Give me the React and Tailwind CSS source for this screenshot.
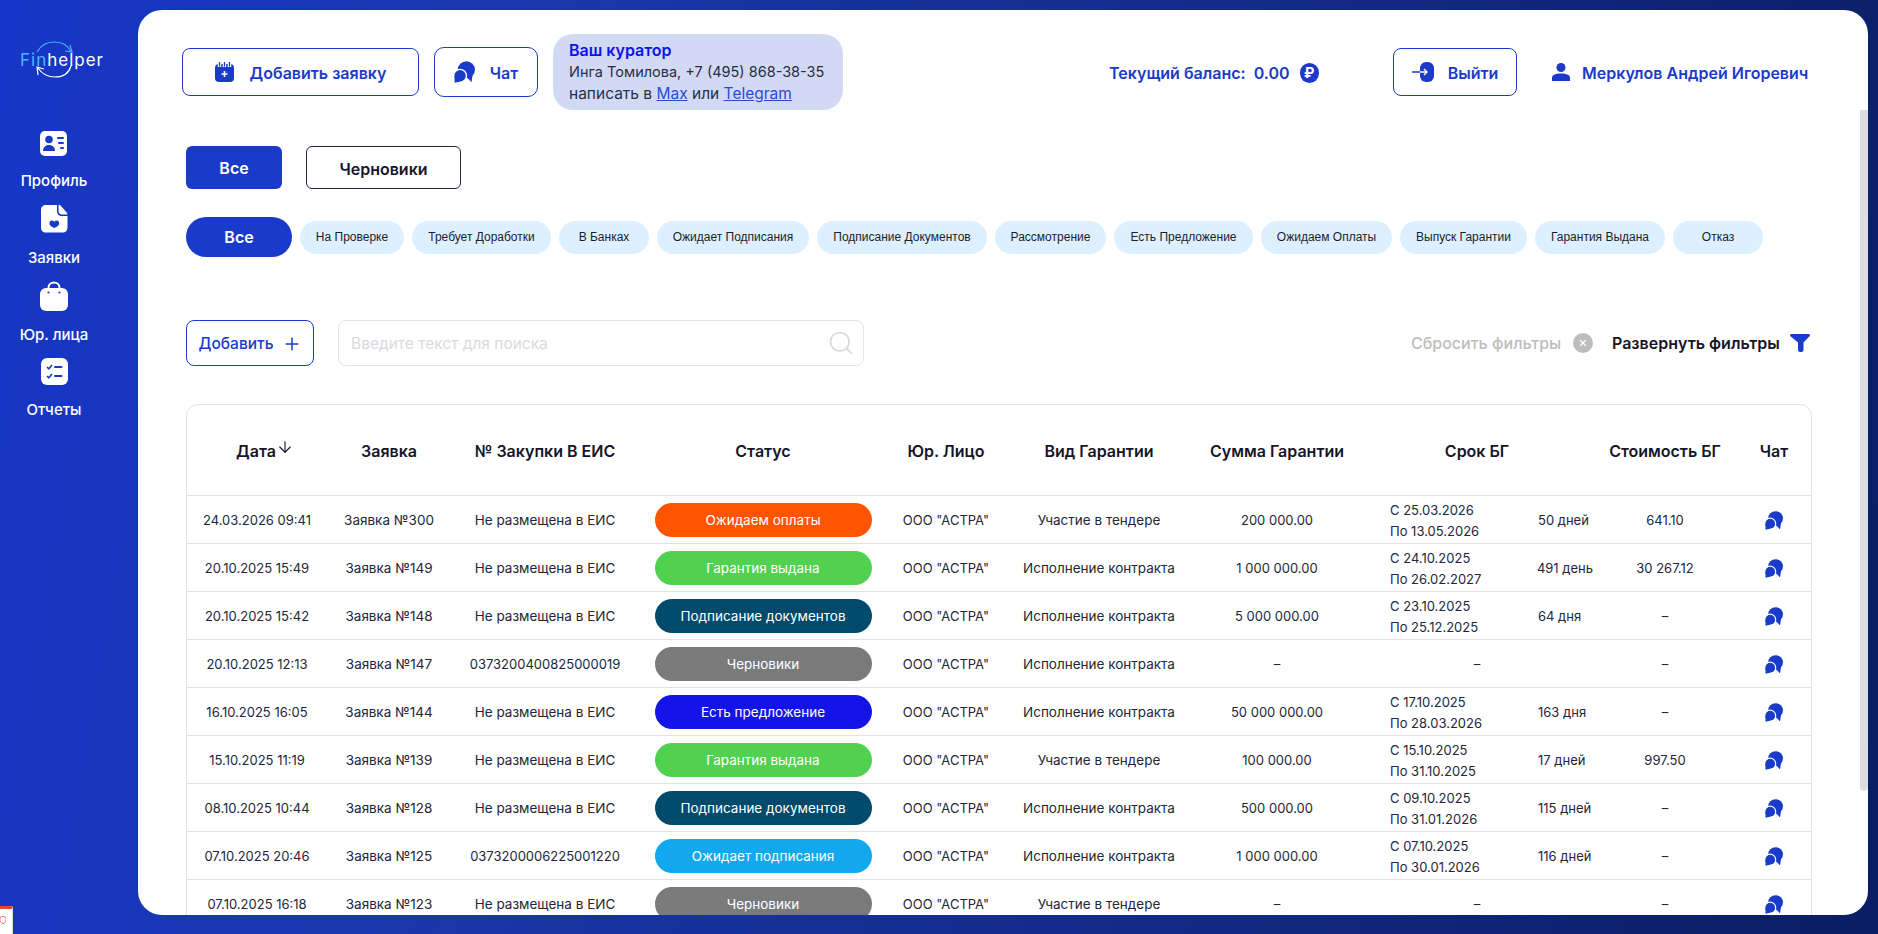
import React from "react";
import { Plus, Search, ArrowDown, X } from "lucide-react";

const rows = [
  { date: "24.03.2026 09:41", num: "Заявка №300", eis: "Не размещена в ЕИС", status: "Ожидаем оплаты", color: "bg-[#ff5500]", kind: "Участие в тендере", sum: "200 000.00", from: "С 25.03.2026", to: "По 13.05.2026", days: "50 дней", cost: "641.10" },
  { date: "20.10.2025 15:49", num: "Заявка №149", eis: "Не размещена в ЕИС", status: "Гарантия выдана", color: "bg-[#52d150]", kind: "Исполнение контракта", sum: "1 000 000.00", from: "С 24.10.2025", to: "По 26.02.2027", days: "491 день", cost: "30 267.12" },
  { date: "20.10.2025 15:42", num: "Заявка №148", eis: "Не размещена в ЕИС", status: "Подписание документов", color: "bg-[#004a6b]", kind: "Исполнение контракта", sum: "5 000 000.00", from: "С 23.10.2025", to: "По 25.12.2025", days: "64 дня", cost: "–" },
  { date: "20.10.2025 12:13", num: "Заявка №147", eis: "0373200400825000019", status: "Черновики", color: "bg-[#7a7a7a]", kind: "Исполнение контракта", sum: "–", cost: "–" },
  { date: "16.10.2025 16:05", num: "Заявка №144", eis: "Не размещена в ЕИС", status: "Есть предложение", color: "bg-[#1414e8]", kind: "Исполнение контракта", sum: "50 000 000.00", from: "С 17.10.2025", to: "По 28.03.2026", days: "163 дня", cost: "–" },
  { date: "15.10.2025 11:19", num: "Заявка №139", eis: "Не размещена в ЕИС", status: "Гарантия выдана", color: "bg-[#52d150]", kind: "Участие в тендере", sum: "100 000.00", from: "С 15.10.2025", to: "По 31.10.2025", days: "17 дней", cost: "997.50" },
  { date: "08.10.2025 10:44", num: "Заявка №128", eis: "Не размещена в ЕИС", status: "Подписание документов", color: "bg-[#004a6b]", kind: "Исполнение контракта", sum: "500 000.00", from: "С 09.10.2025", to: "По 31.01.2026", days: "115 дней", cost: "–" },
  { date: "07.10.2025 20:46", num: "Заявка №125", eis: "0373200006225001220", status: "Ожидает подписания", color: "bg-[#12a8ee]", kind: "Исполнение контракта", sum: "1 000 000.00", from: "С 07.10.2025", to: "По 30.01.2026", days: "116 дней", cost: "–" },
  { date: "07.10.2025 16:18", num: "Заявка №123", eis: "Не размещена в ЕИС", status: "Черновики", color: "bg-[#7a7a7a]", kind: "Участие в тендере", sum: "–", cost: "–" },
];

const pills = [
  { label: "На Проверке", w: "w-[104px]" },
  { label: "Требует Доработки", w: "w-[139px]" },
  { label: "В Банках", w: "w-[90px]" },
  { label: "Ожидает Подписания", w: "w-[152px]" },
  { label: "Подписание Документов", w: "w-[170px]" },
  { label: "Рассмотрение", w: "w-[111px]" },
  { label: "Есть Предложение", w: "w-[139px]" },
  { label: "Ожидаем Оплаты", w: "w-[131px]" },
  { label: "Выпуск Гарантии", w: "w-[127px]" },
  { label: "Гарантия Выдана", w: "w-[130px]" },
  { label: "Отказ", w: "w-[90px]" },
];

const ChatIcon = ({ className }) => (
  <svg viewBox="0 0 18 19" className={className}>
    <circle cx="10.600" cy="7.600" r="7.400" fill="#1a3bc9" />
    <path d="M11 14l4 4.400 1-6.400z" fill="#1a3bc9" />
    <circle cx="5.200" cy="12.700" r="5.500" fill="#1a3bc9" stroke="#fff" strokeWidth="1.200" />
    <path d="M.4 13l.1 5.800 5-1.200z" fill="#1a3bc9" />
  </svg>
);

const ProfileIcon = () => (
  <svg viewBox="0 0 27 25" className="w-[27px] h-[25px]">
    <rect width="27" height="25" rx="5" fill="#fff" />
    <circle cx="9" cy="8.500" r="3.800" fill="#1a3bc9" />
    <path d="M3 20c0-3.800 2.500-6 6-6s6 2.200 6 6z" fill="#1a3bc9" />
    <rect x="17" y="6" width="7" height="2" rx="1" fill="#1a3bc9" />
    <rect x="18" y="11" width="6" height="2" rx="1" fill="#1a3bc9" />
    <rect x="20" y="16" width="4" height="2" rx="1" fill="#1a3bc9" />
  </svg>
);

const DocIcon = () => (
  <svg viewBox="0 0 27 29" className="w-[27px] h-[29px]">
    <path d="M5 1h11v6c0 3 2 5 5 5h5.500v11.500c0 3-2 5-5 5H5c-3 0-5-2-5-5V6c0-3 2-5 5-5z" fill="#fff" />
    <path d="M17.500 .8c1 0 1.500.3 2.200 1l5.600 6.200c.6.700 1 1.300 1.100 2.400H21c-2 0-3.500-1.500-3.500-3.500z" fill="#fff" />
    <path d="M9 17.500c1.200-1.500 3.200-1 4.300.2 1.100-1.200 3.100-1.700 4.300-.2 1.300 1.700.3 3.800-1.300 5l-3 1.500-3-1.500c-1.600-1.200-2.600-3.300-1.300-5z" fill="#1a3bc9" />
  </svg>
);

const BagIcon = () => (
  <svg viewBox="0 0 28 30" className="w-[28px] h-[30px]">
    <path d="M8.500 9V6.500C8.500 3.500 10.800 1.500 14 1.500s5.500 2 5.500 5V9" fill="none" stroke="#fff" strokeWidth="2" />
    <rect y="7" width="28" height="23" rx="6" fill="#fff" />
    <circle cx="8.500" cy="11.500" r="1.100" fill="#1a3bc9" />
    <circle cx="19.500" cy="11.500" r="1.100" fill="#1a3bc9" />
  </svg>
);

const ReportIcon = () => (
  <svg viewBox="0 0 27 27" className="w-[27px] h-[27px]">
    <rect width="27" height="27" rx="6" fill="#fff" />
    <path d="M6 9l1.800 1.800L11 7M6 18l1.800 1.800L11 16" fill="none" stroke="#1a3bc9" strokeWidth="1.600" />
    <rect x="13" y="8" width="8.500" height="2" rx="1" fill="#1a3bc9" />
    <rect x="13" y="17" width="8.500" height="2" rx="1" fill="#1a3bc9" />
  </svg>
);

const nav = [
  { label: "Профиль", icon: <ProfileIcon />, box: "h-[25px] mt-[1px]", gap: "mt-[16px] mb-[14px]" },
  { label: "Заявки", icon: <DocIcon />, box: "h-[29px]", gap: "mt-[16px] mb-[14px]" },
  { label: "Юр. лица", icon: <BagIcon />, box: "h-[30px]", gap: "mt-[15px] mb-[14px]" },
  { label: "Отчеты", icon: <ReportIcon />, box: "h-[27px]", gap: "mt-[16px]" },
];

const Logo = () => (
  <div className="relative ml-[16px] w-[76px] h-[38px] flex items-center justify-center">
    <svg viewBox="0 0 76 38" className="absolute inset-0 w-[76px] h-[38px]">
      <path d="M13 11C17 4 23 1 30 1s14 3 17 10" fill="none" stroke="#4cb4ff" strokeWidth="1.200" />
      <path d="M46 4l2 7-7-1" fill="none" stroke="#4cb4ff" strokeWidth="1.200" />
      <path d="M14 27c4 6 10 9 17 9 8 0 14-4 16-11" fill="none" stroke="#fff" strokeWidth="1.200" />
      <path d="M14 34l-1-8 7 2" fill="none" stroke="#fff" strokeWidth="1.200" />
    </svg>
    <span className="relative text-[17px] leading-none tracking-[1px] font-normal text-white">
      <span className="text-[#4cb4ff]">Fin</span>helper
    </span>
  </div>
);

const Sidebar = () => (
  <aside className="w-[138px] shrink-0 flex flex-col">
    <div className="w-[108px] flex flex-col items-center pt-[41px] text-white">
      <Logo />
      <nav className="mt-[51px] flex flex-col items-center">
        {nav.map((item) => (
          <div key={item.label} className="flex flex-col items-center">
            <div className={`flex items-center ${item.box}`}>{item.icon}</div>
            <span className={`text-[15px] leading-[18px] font-medium whitespace-nowrap ${item.gap}`}>{item.label}</span>
          </div>
        ))}
      </nav>
    </div>
  </aside>
);

const Header = () => (
  <div className="flex items-center pl-[44px] pt-[24px]">
    <button className="w-[237px] h-[48px] flex items-center justify-center gap-[16px] border border-[#1a3bc9] rounded-[8px] text-[16px] font-semibold text-[#1a3bc9]">
      <svg viewBox="0 0 19 20" className="w-[19px] h-[20px]">
        <rect y="2" width="19" height="18" rx="4" fill="#1a3bc9" />
        <path d="M4.500 0v5M9.500 0v5M14.500 0v5" stroke="#fff" strokeWidth="3.500" />
        <path d="M4.500 .5v3.500M9.500 .5v3.500M14.500 .5v3.500" stroke="#1a3bc9" strokeWidth="1.300" strokeLinecap="round" />
        <path d="M9.500 9v6M6.500 12h6" stroke="#fff" strokeWidth="1.600" />
      </svg>
      <span className="pt-[2px]">Добавить заявку</span>
    </button>
    <button className="ml-[15px] w-[104px] h-[50px] flex items-center justify-center gap-[15px] border border-[#1a3bc9] rounded-[10px] text-[16px] font-semibold text-[#1a3bc9]">
      <ChatIcon className="w-[21px] h-[22px]" />
      <span className="pt-[2px]">Чат</span>
    </button>
    <div className="ml-[15px] w-[290px] h-[76px] rounded-[20px] bg-[#d2d9f4] pl-[16px] pt-[6px] text-[14.500px] leading-[21px] text-[#2a2f45]">
      <div className="text-[16px] font-semibold text-[#0a14e6]">Ваш куратор</div>
      <div className="whitespace-nowrap">Инга Томилова, +7 (495) 868-38-35</div>
      <div className="whitespace-nowrap mt-[1px] text-[15.500px]">
        написать в <a className="underline text-[#2a4bd7]">Max</a> или <a className="underline text-[#2a4bd7]">Telegram</a>
      </div>
    </div>
    <div className="ml-[266px] w-[210px] pt-[1px] flex items-center text-[16px] font-semibold text-[#1a3bc9] whitespace-nowrap">
      <span>Текущий баланс:</span>
      <span className="ml-[8px]">0.00</span>
      <span className="ml-[10px] w-[20px] h-[20px] rounded-full bg-[#1a3bc9] flex items-center justify-center text-white text-[14px] font-bold">₽</span>
    </div>
    <button className="ml-[74px] w-[124px] h-[48px] flex items-center justify-center gap-[14px] border border-[#1a3bc9] rounded-[8px] text-[16px] font-semibold text-[#1a3bc9]">
      <svg viewBox="0 0 22 20" className="w-[22px] h-[20px]">
        <rect x="8" width="14" height="20" rx="6" fill="#1a3bc9" />
        <path d="M0 10h8" stroke="#1a3bc9" strokeWidth="1.400" />
        <path d="M8 10h6M12 7l3 3-3 3" fill="none" stroke="#fff" strokeWidth="1.400" />
      </svg>
      <span className="pt-[2px]">Выйти</span>
    </button>
    <div className="ml-[35px] flex items-center gap-[12px] text-[16px] font-semibold text-[#1a3bc9] whitespace-nowrap">
      <svg viewBox="0 0 18 18" className="w-[18px] h-[18px]">
        <circle cx="9" cy="4.500" r="4.500" fill="#1a3bc9" />
        <path d="M0 18v-3c0-3 3-4.500 9-4.500s9 1.500 9 4.500v3z" fill="#1a3bc9" />
      </svg>
      <span className="pt-[2px]">Меркулов Андрей Игоревич</span>
    </div>
  </div>
);

const Filters = () => (
  <div className="pl-[48px]">
    <div className="mt-[36px] flex items-center">
      <button className="w-[96px] h-[43px] pt-[1px] rounded-[6px] bg-[#1a3bc9] text-white text-[16px] font-semibold">Все</button>
      <button className="ml-[24px] w-[155px] h-[43px] pt-[2px] rounded-[6px] border border-[#22243a] text-[#14162a] text-[16px] font-semibold">Черновики</button>
    </div>
    <div className="mt-[28px] h-[40px] flex items-center gap-[8px]">
      <button className="w-[106px] h-[40px] rounded-full bg-[#1a3bc9] text-white text-[16px] font-semibold">Все</button>
      {pills.map((p) => (
        <button key={p.label} className={`${p.w} h-[33px] shrink-0 rounded-full bg-[#ddf0ff] text-[12px] text-[#1c1e2c] whitespace-nowrap font-['Liberation_Sans',sans-serif]`}>
          {p.label}
        </button>
      ))}
    </div>
    <div className="mt-[63px] h-[46px] flex items-center">
      <button className="w-[128px] h-[46px] pt-[2px] flex items-center justify-center gap-[8px] border border-[#1a3bc9] rounded-[8px] text-[15.500px] font-medium text-[#1a3bc9]">
        Добавить
        <Plus className="w-[20px] h-[20px]" strokeWidth={1.800} />
      </button>
      <div className="ml-[24px] w-[526px] h-[46px] flex items-center border border-[#e2e4e9] rounded-[8px] pl-[12px] pr-[8px]">
        <input placeholder="Введите текст для поиска" className="flex-1 pt-[2px] outline-none text-[15.500px] placeholder:text-[#d8dae0]" />
        <Search className="w-[28px] h-[28px] text-[#d8dae0]" strokeWidth={1.500} />
      </div>
      <div className="ml-[547px] w-[182px] flex items-center justify-between text-[16px] font-medium text-[#bdbdbd] whitespace-nowrap">
        Сбросить фильтры
        <span className="w-[20px] h-[20px] rounded-full bg-[#bdbdbd] flex items-center justify-center">
          <X className="w-[10px] h-[10px] text-white" strokeWidth={3} />
        </span>
      </div>
      <div className="ml-[19px] flex items-center gap-[10px] text-[16px] font-semibold text-[#14162a] whitespace-nowrap">
        Развернуть фильтры
        <svg viewBox="0 0 20 18" className="w-[20px] h-[18px]">
          <path d="M1.500 0h17c1.300 0 1.900 1.400 1.100 2.300L13.500 8.500V16c0 1.200-1 2-2 2h-1.500c-1.100 0-2-.8-2-2V8.500L.4 2.300C-.4 1.400.2 0 1.500 0z" fill="#1a3bc9" />
        </svg>
      </div>
    </div>
  </div>
);

const gridCols = "grid grid-cols-[140px_124px_188px_248px_118px_188px_168px_232px_144px_74px] items-center";

const Table = () => (
  <div className="ml-[48px] mt-[38px] w-[1626px] border border-[#e2e2e2] rounded-[12px]">
    <div className={`${gridCols} h-[91px] pt-[2px] border-b border-[#e2e2e2] text-[16px] font-semibold text-[#14162a] text-center whitespace-nowrap`}>
      <div className="flex items-center justify-center pl-[16px]">
        Дата
        <ArrowDown className="w-[18px] h-[18px] -mt-[8px]" strokeWidth={1.500} />
      </div>
      <div>Заявка</div>
      <div>№ Закупки В ЕИС</div>
      <div>Статус</div>
      <div>Юр. Лицо</div>
      <div>Вид Гарантии</div>
      <div>Сумма Гарантии</div>
      <div>Срок БГ</div>
      <div>Стоимость БГ</div>
      <div>Чат</div>
    </div>
    {rows.map((r) => (
      <div key={r.num} className={`${gridCols} h-[48px] pt-[2px] border-b border-[#e2e2e2] text-[13px] text-[#23263a] text-center whitespace-nowrap`}>
        <div>{r.date}</div>
        <div className="text-[13.500px]">{r.num}</div>
        <div className={r.eis.startsWith("Не") ? "text-[13.500px]" : "text-[13px]"}>{r.eis}</div>
        <div className="flex justify-center -mt-[2px]">
          <span className={`${r.color} w-[217px] h-[34px] pt-[2px] rounded-full flex items-center justify-center text-white text-[13.500px]`}>{r.status}</span>
        </div>
        <div>ООО "АСТРА"</div>
        <div className="text-[13.500px]">{r.kind}</div>
        <div>{r.sum}</div>
        {r.from ? (
          <div className="flex items-center pl-[29px] text-left leading-[21px]">
            <div className="w-[148px]">
              <div>{r.from}</div>
              <div>{r.to}</div>
            </div>
            <div>{r.days}</div>
          </div>
        ) : (
          <div>–</div>
        )}
        <div>{r.cost}</div>
        <div className="flex justify-center">
          <ChatIcon className="w-[18px] h-[19px]" />
        </div>
      </div>
    ))}
  </div>
);

export default function App() {
  return (
    <div className="relative h-[934px] w-full overflow-hidden flex bg-[linear-gradient(100deg,#1636c8_0%,#1a36a8_30%,#0a1d63_100%)] font-['Inter',sans-serif]">
      <Sidebar />
      <main className="relative mt-[10px] mb-[19px] w-[1730px] rounded-[24px] bg-white overflow-hidden">
        <Header />
        <Filters />
        <Table />
        <div className="absolute right-0 top-[100px] w-[8px] h-[681px] rounded-b-[4px] bg-[#dcdde1]" />
      </main>
      <div className="absolute left-0 bottom-0 w-[13px] h-[28px] bg-white border-t-[3px] border-t-[#ef4136] border-r border-r-[#d8d8d8]">
        <svg viewBox="0 0 8 10" className="w-[6px] h-[8px] mt-[7px]">
          <path d="M0 1.500L4 0l4 1.500V5c0 2.500-2 4-4 5C2 9 0 7.500 0 5z" fill="none" stroke="#ef6a60" strokeWidth="1.200" />
        </svg>
      </div>
    </div>
  );
}
